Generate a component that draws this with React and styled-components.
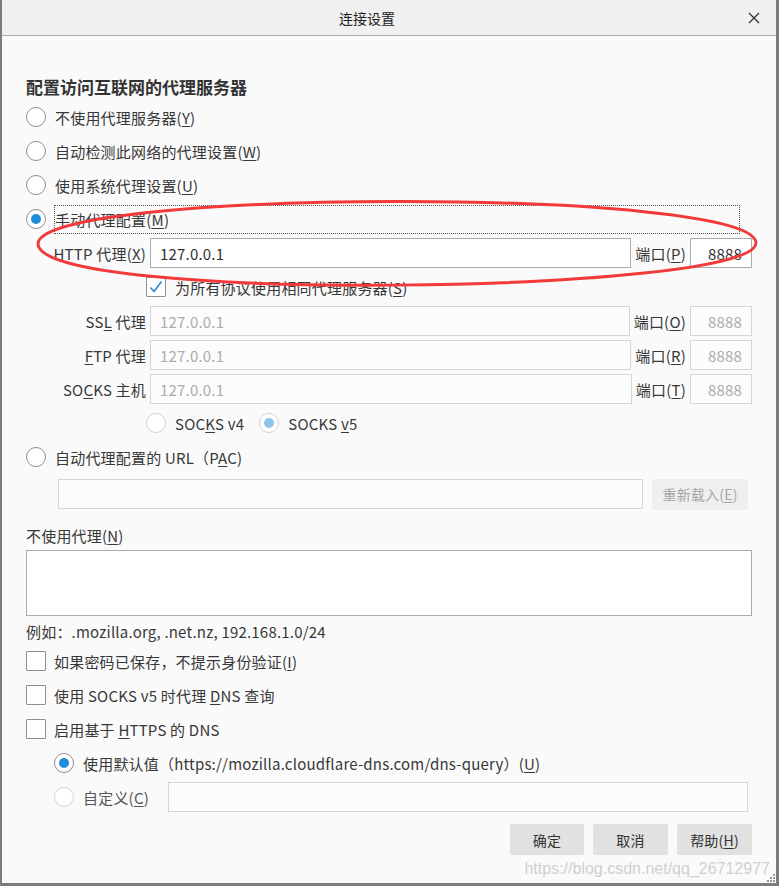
import React from 'react';
import styled, { createGlobalStyle } from 'styled-components';

const Global = createGlobalStyle`
  html, body { margin: 0; padding: 0; background: #fafafa; }
  body { font-family: "Noto Sans CJK SC", sans-serif; }
`;

const Window = styled.div`
  position: relative;
  width: 779px;
  height: 886px;
  box-sizing: border-box;
  border-left: 2px solid #7c7c7c;
  border-right: 3px solid #7c7c7c;
  border-bottom: 3px solid #7c7c7c;
  background: #fafafa;
  display: flex;
  flex-direction: column;
  font-family: "Noto Sans CJK SC", sans-serif;
  font-size: 15px;
  letter-spacing: 0.2px;
  color: #383838;
  overflow: hidden;
`;

const TitleBar = styled.div`
  flex: none;
  height: 36px;
  box-sizing: border-box;
  background: #f0f0f0;
  border-bottom: 1px solid #aaaaaa;
  display: flex;
  align-items: center;
`;

const Title = styled.div`
  flex: 1;
  text-align: center;
  font-size: 14px;
  letter-spacing: 0;
  color: #222;
`;

const CloseButton = styled.div`
  flex: none;
  width: 44px;
  height: 35px;
  display: flex;
  align-items: center;
  justify-content: center;
`;

const Content = styled.div`
  flex: 1;
  padding: 39px 24px 0 24px;
  display: flex;
  flex-direction: column;
`;

const Heading = styled.div`
  font-size: 17px;
  font-weight: 700;
  line-height: 24px;
  letter-spacing: 0;
  color: #333;
  margin-bottom: 1px;
`;

const Row = styled.div`
  display: flex;
  align-items: center;
  height: 34px;
  flex: none;
  gap: ${p => p.$gap ?? 8}px;
  padding-left: ${p => p.$indent || 0}px;
  padding-right: ${p => p.$right || 0}px;
  margin-top: ${p => p.$top || 0}px;
`;

const RadioCircle = styled.span`
  flex: none;
  width: 20px;
  height: 20px;
  box-sizing: border-box;
  border-radius: 50%;
  border: 1px solid ${p => (p.$disabled ? '#d2d2d2' : '#8e8e8e')};
  background: #fff;
  display: flex;
  align-items: center;
  justify-content: center;
  &::after {
    content: '';
    display: ${p => (p.$checked ? 'block' : 'none')};
    width: 10px;
    height: 10px;
    border-radius: 50%;
    background: ${p => (p.$disabled ? '#8cc6ea' : '#1e8ddb')};
  }
`;

const CheckSquare = styled.span`
  flex: none;
  width: 20px;
  height: 20px;
  box-sizing: border-box;
  border: 1px solid #8e8e8e;
  border-radius: 1px;
  background: #fff;
  display: flex;
  align-items: center;
  justify-content: center;
`;

const Label = styled.span`
  line-height: 27px;
  border: 1px dotted ${p => (p.$focused ? '#555' : 'transparent')};
  white-space: nowrap;
  color: ${p => (p.$muted ? '#555' : 'inherit')};
  ${p => p.$grow && `flex: 1; margin-right: 12px;`}
`;

const U = styled.span`
  text-decoration: underline;
  text-underline-offset: 2px;
  text-decoration-thickness: 1px;
`;

const FieldLabel = styled.span`
  flex: none;
  width: 120px;
  text-align: right;
  white-space: nowrap;
`;

const PortLabel = styled.span`
  flex: none;
  white-space: nowrap;
`;

const TextInput = styled.div`
  box-sizing: border-box;
  height: 30px;
  flex: ${p => (p.$width ? 'none' : 1)};
  width: ${p => (p.$width ? `${p.$width}px` : 'auto')};
  min-width: 0;
  margin-left: ${p => p.$offset || 0}px;
  border: 1px solid ${p => (p.$disabled ? '#d6d6d6' : '#ababab')};
  background: ${p => (p.$disabled ? '#fcfcfc' : '#fff')};
  color: ${p => (p.$disabled ? '#ababab' : '#333')};
  padding: 0 9px;
  display: flex;
  align-items: center;
  justify-content: ${p => (p.$right ? 'flex-end' : 'flex-start')};
  font-size: 15px;
`;

const SectionLabel = styled.div`
  line-height: 24px;
  margin-top: ${p => p.$top || 0}px;
`;

const TextArea = styled.div`
  box-sizing: border-box;
  height: 66px;
  margin-top: 2px;
  border: 1px solid #ababab;
  background: #fff;
`;

const Hint = styled.div`
  line-height: 24px;
  margin-top: 4px;
`;

const GreyButton = styled.div`
  flex: none;
  box-sizing: border-box;
  width: ${p => p.$width || 75}px;
  height: 31px;
  border-radius: 2px;
  background: ${p => (p.$disabled ? '#efefef' : '#e1e1e1')};
  color: ${p => (p.$disabled ? '#a5a5a5' : '#333')};
  display: flex;
  align-items: center;
  justify-content: center;
  font-size: 14px;
`;

const ButtonBar = styled.div`
  display: flex;
  justify-content: flex-end;
  gap: 9px;
  margin-top: 10px;
`;

const VersionGroup = styled.div`
  display: flex;
  align-items: center;
  gap: 8px;
  margin-right: 6px;
`;

const Watermark = styled.div`
  position: absolute;
  right: 6px;
  bottom: 5px;
  font-family: "Liberation Sans", Arial, sans-serif;
  font-size: 16px;
  letter-spacing: 0;
  color: #d0d0d0;
  pointer-events: none;
`;

const Annotation = styled.svg`
  position: absolute;
  left: -2px;
  top: 0;
  pointer-events: none;
`;

const Grip = styled.svg`
  position: absolute;
  right: 0;
  bottom: 0;
`;

const Radio = ({ checked, disabled }) => <RadioCircle $checked={checked} $disabled={disabled} />;

const Check = ({ checked }) => (
  <CheckSquare>
    {checked && (
      <svg width="16" height="16" viewBox="0 0 16 16">
        <path d="M2.5 8.5 L6 12.5 L13.5 2.5" fill="none" stroke="#2a8bd6" strokeWidth="1.6" />
      </svg>
    )}
  </CheckSquare>
);

const ProxyRow = ({ label, port, portKey, value, disabled }) => (
  <Row $gap={4}>
    <FieldLabel>{label}</FieldLabel>
    <TextInput $disabled={disabled}>{value}</TextInput>
    <PortLabel>
      端口(<U>{portKey}</U>)
    </PortLabel>
    <TextInput $width={62} $right $disabled={disabled}>
      {port}
    </TextInput>
  </Row>
);

export default function App() {
  return (
    <>
      <Global />
      <Window>
        <TitleBar>
          <Title>连接设置</Title>
          <CloseButton>
            <svg width="12" height="12" viewBox="0 0 12 12">
              <path d="M1 1 L11 11 M11 1 L1 11" stroke="#333" strokeWidth="1.3" />
            </svg>
          </CloseButton>
        </TitleBar>
        <Content>
          <Heading>配置访问互联网的代理服务器</Heading>
          <Row>
            <Radio />
            <Label>
              不使用代理服务器(<U>Y</U>)
            </Label>
          </Row>
          <Row>
            <Radio />
            <Label>
              自动检测此网络的代理设置(<U>W</U>)
            </Label>
          </Row>
          <Row>
            <Radio />
            <Label>
              使用系统代理设置(<U>U</U>)
            </Label>
          </Row>
          <Row>
            <Radio checked />
            <Label $focused $grow>
              手动代理配置(<U>M</U>)
            </Label>
          </Row>
          <ProxyRow
            label={<>HTTP 代理(<U>X</U>)</>}
            value="127.0.0.1"
            portKey="P"
            port="8888"
          />
          <Row $indent={120}>
            <Check checked />
            <Label>
              为所有协议使用相同代理服务器(<U>S</U>)
            </Label>
          </Row>
          <ProxyRow
            label={<>SS<U>L</U> 代理</>}
            value="127.0.0.1"
            portKey="O"
            port="8888"
            disabled
          />
          <ProxyRow
            label={<><U>F</U>TP 代理</>}
            value="127.0.0.1"
            portKey="R"
            port="8888"
            disabled
          />
          <ProxyRow
            label={<>SO<U>C</U>KS 主机</>}
            value="127.0.0.1"
            portKey="T"
            port="8888"
            disabled
          />
          <Row $indent={120} $gap={8}>
            <VersionGroup>
              <Radio disabled />
              <Label>
                SOC<U>K</U>S v4
              </Label>
            </VersionGroup>
            <VersionGroup>
              <Radio disabled checked />
              <Label>
                SOCKS <U>v</U>5
              </Label>
            </VersionGroup>
          </Row>
          <Row>
            <Radio />
            <Label>
              自动代理配置的 URL（P<U>A</U>C)
            </Label>
          </Row>
          <Row $indent={32} $right={4} $gap={9} $top={3}>
            <TextInput $disabled />
            <GreyButton $width={96} $disabled>
              重新载入(<U>E</U>)
            </GreyButton>
          </Row>
          <SectionLabel $top={13}>
            不使用代理(<U>N</U>)
          </SectionLabel>
          <TextArea />
          <Hint>例如：.mozilla.org, .net.nz, 192.168.1.0/24</Hint>
          <Row $gap={7}>
            <Check />
            <Label>
              如果密码已保存，不提示身份验证(<U>I</U>)
            </Label>
          </Row>
          <Row $gap={7}>
            <Check />
            <Label>
              使用 SOCKS v5 时代理 <U>D</U>NS 查询
            </Label>
          </Row>
          <Row $gap={7}>
            <Check />
            <Label>
              启用基于 <U>H</U>TTPS 的 DNS
            </Label>
          </Row>
          <Row $indent={28}>
            <Radio checked />
            <Label>
              使用默认值（https://mozilla.cloudflare-dns.com/dns-query）(<U>U</U>)
            </Label>
          </Row>
          <Row $indent={28} $right={4}>
            <Radio disabled />
            <Label $muted>
              自定义(<U>C</U>)
            </Label>
            <TextInput $disabled $offset={10} />
          </Row>
          <ButtonBar>
            <GreyButton $width={74}>确定</GreyButton>
            <GreyButton>取消</GreyButton>
            <GreyButton>
              帮助(<U>H</U>)
            </GreyButton>
          </ButtonBar>
        </Content>
        <Annotation width="779" height="320" viewBox="0 0 779 320">
          <path
            d="M38 244 C38 188 756 187 756 243 C756 294 40 304 38 244 Z"
            fill="none"
            stroke="#f23a3a"
            strokeWidth="3"
          />
        </Annotation>
        <Watermark>https://blog.csdn.net/qq_26712977</Watermark>
        <Grip width="10" height="10" viewBox="0 0 10 10">
          <g fill="#9a9a9a">
            <rect x="7" y="1" width="2" height="2" />
            <rect x="4" y="4" width="2" height="2" />
            <rect x="7" y="4" width="2" height="2" />
            <rect x="1" y="7" width="2" height="2" />
            <rect x="4" y="7" width="2" height="2" />
            <rect x="7" y="7" width="2" height="2" />
          </g>
        </Grip>
      </Window>
    </>
  );
}
